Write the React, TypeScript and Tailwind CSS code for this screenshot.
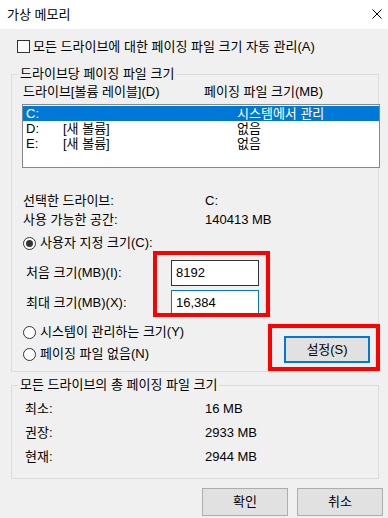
import React from "react";

const drives = [
  { drive: "C:", label: "", size: "시스템에서 관리", selected: true },
  { drive: "D:", label: "[새 볼륨]", size: "없음", selected: false },
  { drive: "E:", label: "[새 볼륨]", size: "없음", selected: false },
];

const totals = [
  { label: "최소:", value: "16 MB" },
  { label: "권장:", value: "2933 MB" },
  { label: "현재:", value: "2944 MB" },
];

const Radio = ({ checked, label }: { checked?: boolean; label: string }) => (
  <div className="flex items-center h-[20px] ml-[11px]">
    <span className="w-[13px] h-[13px] rounded-full border border-[#333333] bg-white flex items-center justify-center">
      {checked && <span className="w-[7px] h-[7px] rounded-full bg-[#333333]" />}
    </span>
    <span className="ml-[4px]">{label}</span>
  </div>
);

const Legend = ({ text }: { text: string }) => (
  <div className="-mt-[9px] ml-[6px] px-[2px] w-fit h-[16px] leading-[16px] bg-[#f0f0f0]">
    {text}
  </div>
);

const App = () => {
  return (
    <div className="relative w-[388px] h-[518px] overflow-hidden bg-[#f0f0f0] text-[13px] text-black font-['Liberation_Sans','Noto_Sans_CJK_KR',sans-serif]">
      {/* title bar */}
      <div className="h-[29px] bg-white flex items-center justify-between pl-[7px] pr-[6px]">
        <span className="leading-[16px]">가상 메모리</span>
        <svg width="10" height="10" viewBox="0 0 10 10" className="mt-[-1px]">
          <path d="M0.5 0.5 L9.5 9.5 M9.5 0.5 L0.5 9.5" stroke="#000" strokeWidth="1" fill="none" />
        </svg>
      </div>

      {/* auto manage */}
      <div className="mt-[11px] ml-[17px] flex items-center h-[13px]">
        <span className="w-[13px] h-[13px] border border-[#333333] bg-white" />
        <span className="ml-[3px] leading-[16px]">모든 드라이브에 대한 페이징 파일 크기 자동 관리(A)</span>
      </div>

      {/* per drive group */}
      <div className="mt-[21px] ml-[11px] w-[368px] h-[298px] border border-[#dcdcdc]">
        <Legend text="드라이브당 페이징 파일 크기" />

        <div className="mt-[2px] ml-[11px] flex h-[16px] leading-[16px]">
          <span className="w-[181px]">드라이브[볼륨 레이블](D)</span>
          <span>페이징 파일 크기(MB)</span>
        </div>

        <div className="mt-[4px] ml-[10px] w-[358px] h-[64px] border border-[#828790] bg-white pt-[1px]">
          {drives.map((d) => (
            <div
              key={d.drive}
              className={`flex items-center h-[15px] leading-[15px] pl-[3px] ${
                d.selected ? "bg-[#0078d7] text-white" : ""
              }`}
            >
              <span className="w-[37px]">{d.drive}</span>
              <span className="w-[174px]">{d.label}</span>
              <span>{d.size}</span>
            </div>
          ))}
        </div>

        <div className="mt-[23px] ml-[11px] flex h-[19px] leading-[19px]">
          <span className="w-[182px]">선택한 드라이브:</span>
          <span>C:</span>
        </div>
        <div className="ml-[11px] flex h-[19px] leading-[19px]">
          <span className="w-[182px]">사용 가능한 공간:</span>
          <span>140413 MB</span>
        </div>

        <div className="mt-[4px]">
          <Radio checked label="사용자 지정 크기(C):" />
        </div>

        <div className="mt-[7px] ml-[14px] flex items-center h-[26px]">
          <span className="w-[145px]">처음 크기(MB)(I):</span>
          <div className="w-[88px] h-[26px] border border-[#333333] bg-white pl-[4px] flex items-center leading-[16px]">
            8192
          </div>
        </div>
        <div className="mt-[4px] ml-[14px] flex items-center h-[26px]">
          <span className="w-[145px]">최대 크기(MB)(X):</span>
          <div className="w-[88px] h-[26px] border border-[#0078d7] bg-white pl-[4px] flex items-center leading-[16px]">
            16,384
          </div>
        </div>

        <div className="mt-[6px] flex">
          <div className="flex flex-col gap-[2px]">
            <Radio label="시스템이 관리하는 크기(Y)" />
            <Radio label="페이징 파일 없음(N)" />
          </div>
          <button className="ml-auto mr-[8px] mt-[14px] w-[86px] h-[27px] border-2 border-[#0078d7] bg-[#e1e1e1] flex items-center justify-center leading-[16px]">
            설정(S)
          </button>
        </div>
      </div>

      {/* totals group */}
      <div className="mt-[13px] ml-[11px] w-[368px] h-[94px] border border-[#dcdcdc]">
        <Legend text="모든 드라이브의 총 페이징 파일 크기" />
        <div className="mt-[4px]">
          {totals.map((t) => (
            <div key={t.label} className="ml-[13px] flex h-[24px] leading-[24px]">
              <span className="w-[180px]">{t.label}</span>
              <span>{t.value}</span>
            </div>
          ))}
        </div>
      </div>

      {/* dialog buttons */}
      <div className="mt-[9px] pr-[5px] flex justify-end gap-[9px]">
        <button className="w-[86px] h-[28px] border border-[#adadad] bg-[#e1e1e1] flex items-center justify-center leading-[16px]">
          확인
        </button>
        <button className="w-[86px] h-[28px] border border-[#adadad] bg-[#e1e1e1] flex items-center justify-center leading-[16px]">
          취소
        </button>
      </div>

      {/* red highlight annotations */}
      <div className="absolute left-[153px] top-[251px] w-[117px] h-[66px] border-4 border-[#ff0000]" />
      <div className="absolute left-[268px] top-[324px] w-[112px] h-[47px] border-4 border-[#ff0000]" />
    </div>
  );
};

export default App;
